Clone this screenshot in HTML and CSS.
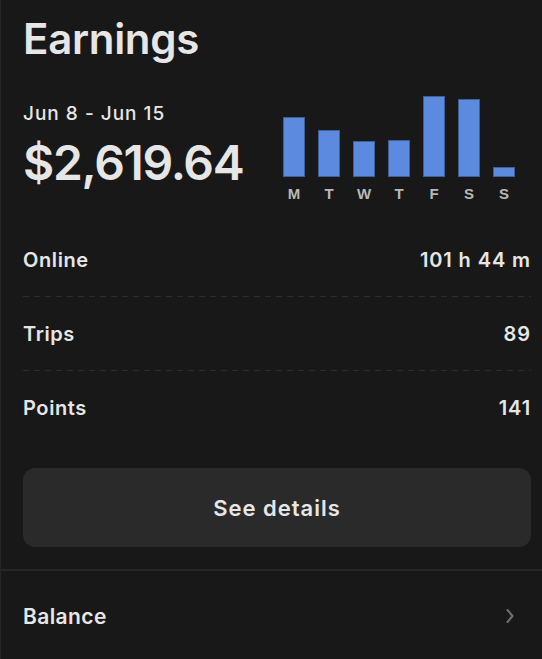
FILE: index.html
```html
<!DOCTYPE html>
<html lang="en">
<head>
  <meta charset="UTF-8" />
  <meta name="viewport" content="width=device-width, initial-scale=1.0" />
  <title>Earnings</title>
  <link rel="stylesheet" href="styles.css">
</head>
<body>
  <div class="page">
    <h1 class="title">Earnings</h1>

    <div class="summary">
      <div class="totals">
        <div class="range">Jun 8 - Jun 15</div>
        <div class="amount">$2,619.64</div>
      </div>
      <div class="chart">
        <div class="day"><div class="bar" style="height: 60px"></div><span>M</span></div>
        <div class="day"><div class="bar" style="height: 47px"></div><span>T</span></div>
        <div class="day"><div class="bar" style="height: 36px"></div><span>W</span></div>
        <div class="day"><div class="bar" style="height: 37px"></div><span>T</span></div>
        <div class="day"><div class="bar" style="height: 81px"></div><span>F</span></div>
        <div class="day"><div class="bar" style="height: 78px"></div><span>S</span></div>
        <div class="day"><div class="bar" style="height: 10px"></div><span>S</span></div>
      </div>
    </div>

    <div class="stats">
      <div class="stat"><span>Online</span><span>101 h 44 m</span></div>
      <div class="stat"><span>Trips</span><span>89</span></div>
      <div class="stat"><span>Points</span><span>141</span></div>
    </div>

    <button class="details">See details</button>
  </div>

  <div class="balance">
    <span>Balance</span>
    <svg class="chevron" width="10" height="16" viewBox="0 0 10 16">
      <path d="M2.5 2 L7.5 8 L2.5 14" fill="none" stroke="#6f6f6f" stroke-width="2" stroke-linecap="round" stroke-linejoin="round"/>
    </svg>
  </div>
</body>
</html>
```

FILE: styles.css
```css
* { box-sizing: border-box; }
html, body {
  margin: 0;
  padding: 0;
  background: #181818;
  color: #e6e6e6;
  font-family: Inter, "Noto Sans", sans-serif;
}
body {
  border-left: 1px solid #262626;
  min-height: 659px;
}
.page {
  padding: 12px 11px 0 22px;
}
.title {
  margin: 0;
  font-size: 42px;
  font-weight: 600;
  letter-spacing: -0.3px;
  line-height: 54px;
}
.summary {
  display: flex;
  justify-content: space-between;
  margin-top: 30px;
}
.range {
  font-size: 19px;
  font-weight: 500;
  line-height: 24px;
  margin-top: 6px;
  letter-spacing: 1px;
}
.amount {
  font-size: 48px;
  font-weight: 600;
  letter-spacing: -1.3px;
  line-height: 58px;
  margin-top: 8px;
}
.chart {
  display: flex;
  align-items: flex-end;
  gap: 13px;
  height: 106px;
  margin-right: 16px;
}
.day {
  display: flex;
  flex-direction: column;
  align-items: center;
  width: 22px;
}
.bar {
  width: 22px;
  background: #5b8ade;
  border: 1px solid #3f5f98;
}
.day span {
  font-size: 15px;
  font-weight: 700;
  color: #b8b8b8;
  line-height: 17px;
  margin-top: 8px;
  font-family: "Liberation Sans", Arial, sans-serif;
}
.stats {
  margin-top: 21px;
}
.stat {
  display: flex;
  justify-content: space-between;
  align-items: center;
  height: 74px;
  font-size: 20px;
  font-weight: 600;
  letter-spacing: 0.6px;
  background-image: repeating-linear-gradient(to right, #2c2c2c 0 6px, transparent 6px 11px);
  background-size: 100% 1px;
  background-position: 0 bottom;
  background-repeat: no-repeat;
}
.stat span:last-child { letter-spacing: 0.9px; }
.stat:last-child { background-image: none; }
.details {
  display: block;
  width: 100%;
  height: 79px;
  margin-top: 23px;
  border: none;
  border-radius: 12px;
  background: #2a2a2a;
  color: #e6e6e6;
  font-family: inherit;
  font-size: 22px;
  font-weight: 600;
  letter-spacing: 1px;
  cursor: pointer;
}
.balance {
  display: flex;
  justify-content: space-between;
  align-items: center;
  margin-top: 22px;
  border-top: 2px solid #262626;
  height: 92px;
  padding: 0 27px 0 22px;
  font-size: 21px;
  font-weight: 600;
  letter-spacing: 0.4px;
}
```
